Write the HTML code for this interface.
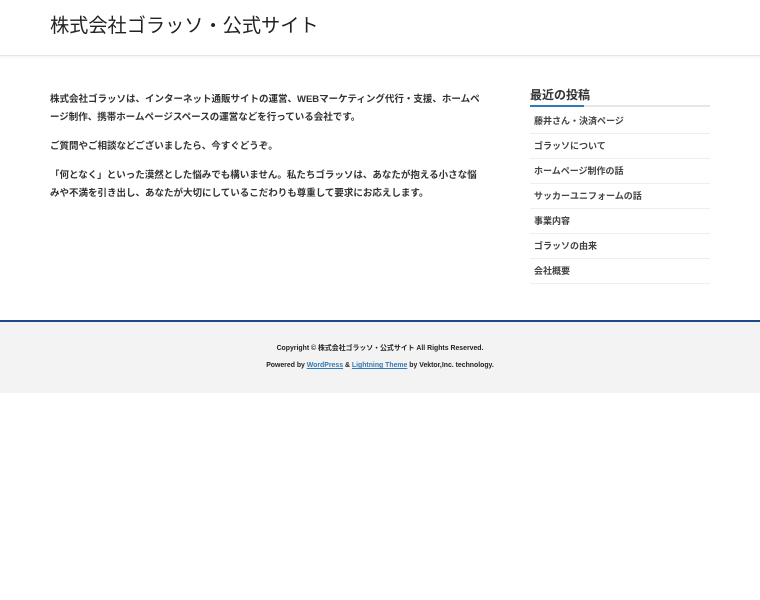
<!DOCTYPE html>
<html><head><meta charset="utf-8"><style>
*{margin:0;padding:0;box-sizing:border-box}
body{width:760px;height:600px;background:#fff;font-family:"Liberation Sans","Noto Sans CJK JP",sans-serif;color:#333;position:relative;overflow:hidden}
.hd{position:absolute;left:0;top:0;width:760px;height:56px;border-bottom:1px solid #e5e5e5;box-shadow:0 1px 3px rgba(0,0,0,.06)}
.hd h1{position:absolute;left:50px;top:13px;font-size:19.2px;font-weight:normal;color:#222;line-height:28px}
.main{position:absolute;left:50px;top:91px;width:435px;font-size:9.5px;line-height:18px;font-weight:bold;color:#333}
.main p{margin-bottom:11px}
.side{position:absolute;left:530px;top:86px;width:180px}
.side h3{font-size:12px;font-weight:bold;color:#333;line-height:18px;height:21px;border-bottom:2px solid #e6e6e6;position:relative}
.side h3:after{content:"";position:absolute;left:0;bottom:-2px;width:54px;height:2px;background:#337ab7}
.side ul{margin-top:2px}
.side li{list-style:none;font-size:9px;font-weight:bold;color:#444;height:25px;line-height:24px;padding-left:4px;border-bottom:1px solid #eee}
.ft{position:absolute;left:0;top:320px;width:760px;height:73px;background:#f3f3f3;border-top:2px solid #1c4a8e;text-align:center;font-size:6.9px;font-weight:bold;color:#222}
.ft a{color:#337ab7;text-decoration:underline}
</style></head><body>
<div class="hd"><h1>株式会社ゴラッソ・公式サイト</h1></div>
<div class="main">
<p>株式会社ゴラッソは、インターネット通販サイトの運営、WEBマーケティング代行・支援、ホームページ制作、携帯ホームページスペースの運営などを行っている会社です。</p>
<p>ご質問やご相談などございましたら、今すぐどうぞ。</p>
<p>「何となく」といった漠然とした悩みでも構いません。私たちゴラッソは、あなたが抱える小さな悩みや不満を引き出し、あなたが大切にしているこだわりも尊重して要求にお応えします。</p>
</div>
<div class="side"><h3>最近の投稿</h3><ul>
<li>藤井さん・決済ページ</li><li>ゴラッソについて</li><li>ホームページ制作の話</li><li>サッカーユニフォームの話</li><li>事業内容</li><li>ゴラッソの由来</li><li>会社概要</li></ul></div>
<div class="ft"><div style="margin-top:20px">Copyright © 株式会社ゴラッソ・公式サイト All Rights Reserved.</div>
<div style="margin-top:10px">Powered by <a>WordPress</a> &amp; <a>Lightning Theme</a> by Vektor,Inc. technology.</div></div>
</body></html>
